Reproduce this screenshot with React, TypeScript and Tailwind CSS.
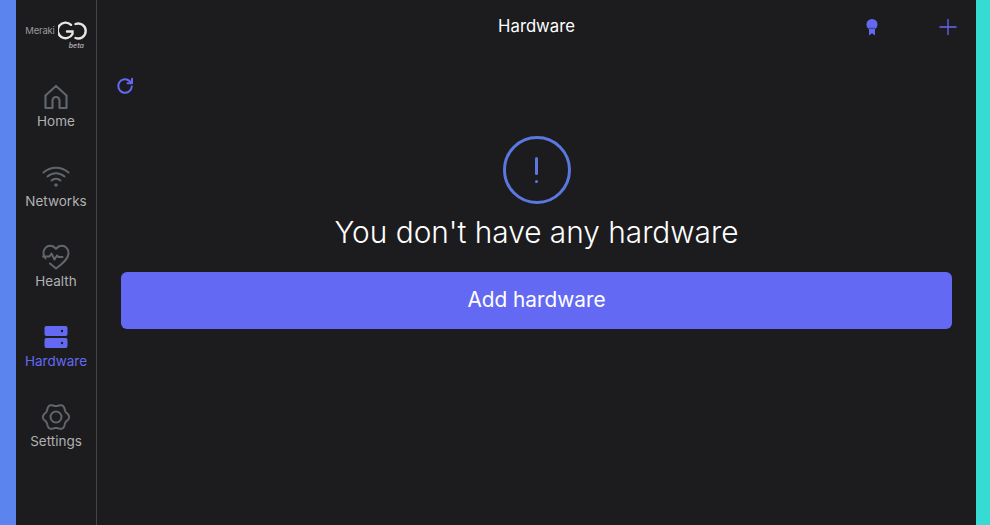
import React from "react";

const navIcon = "w-7 h-7";

const gearPath = Array.from({ length: 120 }, (_, i) => {
  const t = (i / 120) * Math.PI * 2;
  const r = 12 + 1.1 * Math.cos(6 * t);
  return `${i === 0 ? "M" : "L"}${(14 + r * Math.cos(t)).toFixed(2)} ${(14 + r * Math.sin(t)).toFixed(2)}`;
}).join(" ") + "z";

function HomeIcon() {
  return (
    <svg viewBox="0 0 28 28" className={navIcon} fill="none" stroke="#5f666d" strokeWidth="2.200" strokeLinejoin="round">
      <path d="M3.500 12.500 14 3l10.500 9.500V25H17.500v-7.500a3.500 3.500 0 0 0-7 0V25H3.500z" />
    </svg>
  );
}
function WifiIcon() {
  return (
    <svg viewBox="0 0 28 28" className={navIcon} fill="none" stroke="#5f666d" strokeWidth="2" strokeLinecap="round">
      <path d="M1.500 9.500C8.500 3 19.500 3 26.500 9.500" />
      <path d="M5.500 13.500C10.500 9 17.500 9 22.500 13.500" />
      <path d="M9.500 17.500C12 15 16 15 18.500 17.500" />
      <circle cx="14" cy="22" r="1.800" fill="#5f666d" stroke="none" />
    </svg>
  );
}
function HeartIcon() {
  return (
    <svg viewBox="0 0 28 28" className={navIcon} fill="none" stroke="#5f666d" strokeWidth="2" strokeLinecap="round" strokeLinejoin="round">
      <path d="M3.500 15.500C2.200 13.800 1.500 12 1.500 10 1.500 6 4.500 2.800 8 2.800c2.500 0 4.500 1 6 3 1.500-2 3.500-3 6-3 3.500 0 6.500 3.200 6.500 7.200 0 5-3.500 9-12.500 15.500L8 20.500" />
      <path d="M1 13.500h6.500l2-3 3 6 2.500-4 1.500 1.500h4" />
    </svg>
  );
}
function ServerIcon() {
  return (
    <svg viewBox="0 0 28 28" className={navIcon}>
      <rect x="2.500" y="3" width="23" height="10" rx="2" fill="#6469f4" />
      <rect x="2.500" y="15" width="23" height="10" rx="2" fill="#6469f4" />
      <circle cx="20" cy="8" r="1.200" fill="#1c1c1e" />
      <circle cx="20" cy="20" r="1.200" fill="#1c1c1e" />
    </svg>
  );
}
function GearIcon() {
  return (
    <svg viewBox="0 0 28 28" className={navIcon} fill="none" stroke="#5f666d" strokeWidth="2" strokeLinejoin="round">
      <path d={gearPath} />
      <circle cx="14" cy="14" r="5.500" />
    </svg>
  );
}

function NavItem({ icon, label, active }: { icon: React.ReactNode; label: string; active?: boolean }) {
  return (
    <div className="h-20 flex flex-col items-center">
      {icon}
      <span className={`text-[13.500px] leading-[18px] mt-[1px] ${active ? "text-[#6469f4]" : "text-[#b0b0b2]"}`}>{label}</span>
    </div>
  );
}

export default function App() {
  return (
    <div className="flex w-[990px] h-[525px] overflow-hidden bg-[#1c1c1e] font-['Inter',sans-serif]">
      <div className="w-4 bg-[#5b84ee]" />
      <aside className="w-[81px] border-r border-[#444446] flex flex-col">
        <div className="h-[83px] pt-[21px] flex flex-col items-center">
          <div className="flex items-center ml-[1px]">
            <span className="text-[9.500px] leading-[20px] text-[#9a9a9c] tracking-[-0.2px] mr-[3px]">Meraki</span>
            <svg viewBox="0 0 30 20" className="w-[30px] h-5" fill="none" stroke="#e6e6e6" strokeWidth="2.400" strokeLinecap="round">
              <path d="M13 3.800A7.800 7.800 0 1 0 14.500 13V10.500H9" />
              <path d="M17.500 3A7.500 7.500 0 1 1 17.500 17" />
            </svg>
          </div>
          <span className="self-end mr-[12px] mt-[1px] text-[7px] leading-[7px] italic font-semibold text-[#a8a8aa]">beta</span>
        </div>
        <NavItem icon={<HomeIcon />} label="Home" />
        <NavItem icon={<WifiIcon />} label="Networks" />
        <NavItem icon={<HeartIcon />} label="Health" />
        <NavItem icon={<ServerIcon />} label="Hardware" active />
        <NavItem icon={<GearIcon />} label="Settings" />
      </aside>
      <main className="flex-1 min-w-0 flex flex-col">
        <header className="h-[53px] flex items-center relative shrink-0">
          <h1 className="w-full text-center text-white text-[16.700px] font-normal">Hardware</h1>
          <svg viewBox="0 0 12 17" className="absolute left-[769px] top-[19px] w-3 h-[17px]">
            <circle cx="6" cy="5.500" r="5.500" fill="#6469f4" />
            <path d="M3 10h6v6.500L6 14.300 3 16.500z" fill="#6469f4" />
            <path d="M2.500 9.300h7" stroke="#1c1c1e" strokeWidth="0.600" />
          </svg>
          <svg viewBox="0 0 18 18" className="absolute left-[842px] top-[18px] w-[18px] h-[18px]" stroke="#6469f4" strokeWidth="1.300">
            <path d="M.5 9h17M9 1v16" />
          </svg>
        </header>
        <div className="pl-[19px] pt-[24px] h-[83px] shrink-0">
          <svg viewBox="0 0 18 18" className="w-[18px] h-[18px]" fill="none" stroke="#6469f4" strokeWidth="2" strokeLinecap="round" strokeLinejoin="round">
            <path d="M15.800 9.500A6.800 6.800 0 1 1 13.800 4.200L16 6" />
            <path d="M16 1.800V6.200H11.600" />
          </svg>
        </div>
        <div className="flex flex-col items-center px-6">
          <div className="w-[68px] h-[68px] rounded-full border-[3px] border-[#5b78e0] flex flex-col items-center justify-center">
            <div className="w-[2.500px] h-[18px] bg-[#5b78e0] rounded-full" />
            <div className="w-[3px] h-[3px] mt-[5px] bg-[#5b78e0] rounded-full" />
          </div>
          <p className="mt-[8px] text-[29.800px] leading-[40px] text-white font-light">You don't have any hardware</p>
          <button className="mt-[20px] w-full h-[57px] rounded-md bg-[#6469f4] text-white text-[20.800px] leading-[55px] pb-[2px] font-normal">Add hardware</button>
        </div>
      </main>
      <div className="w-[14px] bg-[#36dbd3]" />
    </div>
  );
}
